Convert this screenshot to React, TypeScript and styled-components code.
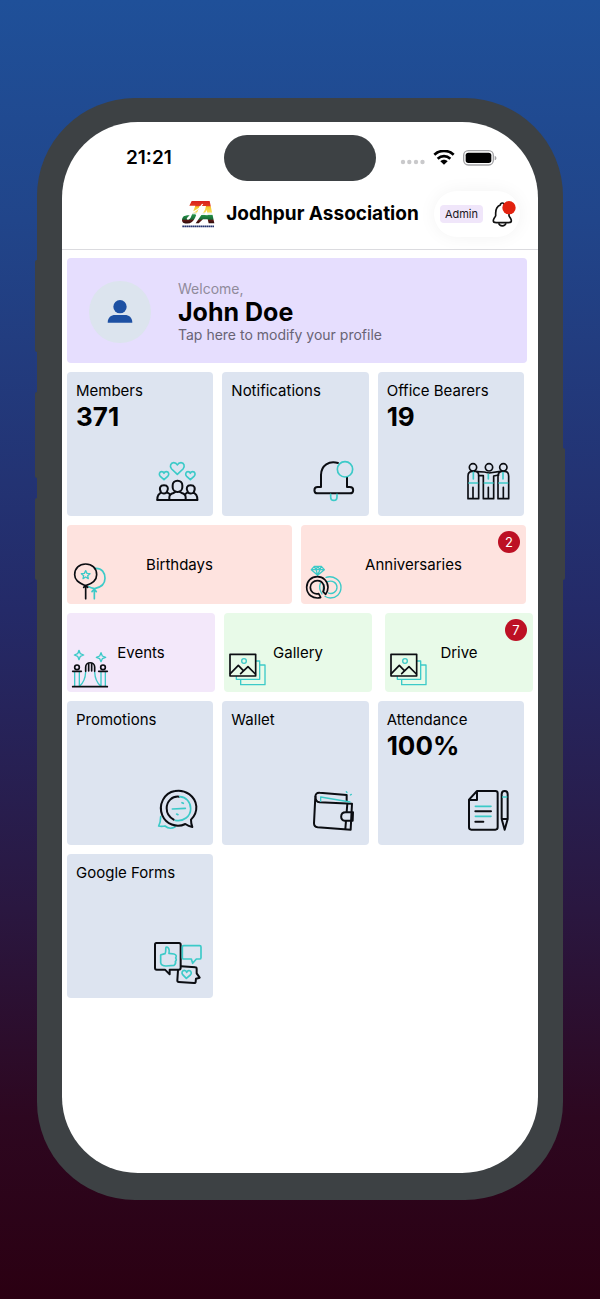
import { FunctionComponent, ReactNode } from "react";
import styled, { createGlobalStyle } from "styled-components";

const INK = "#0b0d12";
const TEAL = "#3ccac8";

const GlobalStyle = createGlobalStyle`
  * {
    box-sizing: border-box;
  }
  body {
    margin: 0;
    font-family: Inter, "Liberation Sans", sans-serif;
    color: #000;
  }
  button {
    font: inherit;
    color: inherit;
    border: 0;
    cursor: pointer;
  }
`;

const Page = styled.div`
  min-height: 100vh;
  padding: 98px 37px 99px;
  background: linear-gradient(
    180deg,
    #1f5099 0%,
    #21458a 17%,
    #242a68 47%,
    #2a1740 70%,
    #2d0720 86%,
    #2b0012 100%
  );
`;
const Phone = styled.div`
  position: relative;
  padding: 24px 25px 27px;
  background: #3d4144;
  border-radius: 98px;
`;
const SideKey = styled.span<{ $side: "left" | "right"; $top: number; $height: number }>`
  position: absolute;
  ${({ $side }) => $side}: -2px;
  top: ${({ $top }) => $top}px;
  height: ${({ $height }) => $height}px;
  width: 4px;
  background: #3d4144;
  border-radius: 2px;
`;
const Screen = styled.div`
  min-height: calc(100vh - 248px);
  background: #fff;
  border-radius: 76px;
  overflow: hidden;
`;

const StatusBar = styled.div`
  display: grid;
  grid-template-columns: 1fr 152px 1fr;
  align-items: center;
  padding-top: 13px;
  height: 59px;
`;
const Time = styled.span`
  padding-left: 64px;
  font-size: 19px;
  font-weight: 600;
  line-height: 24px;
`;
const Island = styled.div`
  height: 46px;
  border-radius: 23px;
  background: #3d4144;
`;
const StatusIcons = styled.div`
  display: flex;
  align-items: center;
  justify-content: flex-end;
  gap: 8px;
  padding-right: 41px;
`;

const Header = styled.header`
  display: grid;
  grid-template-columns: 1fr auto 1fr;
  align-items: center;
  padding: 10px 0 12px;
  border-bottom: 1px solid #dbdbdf;
`;
const Brand = styled.div`
  grid-column: 2;
  display: flex;
  align-items: center;
  gap: 10px;
`;
const Title = styled.h1`
  margin: 0;
  font-size: 19px;
  font-weight: 700;
  line-height: 26px;
  white-space: nowrap;
`;
const Account = styled.div`
  justify-self: end;
  display: flex;
  align-items: center;
  gap: 9px;
  height: 46px;
  margin-right: 18px;
  padding: 0 4px 0 6px;
  border-radius: 23px;
  background: #fff;
  box-shadow: 0 0 18px rgba(0, 0, 0, 0.05);
`;
const Role = styled.span`
  padding: 0 5px;
  border-radius: 4px;
  background: #f0e6fa;
  color: #1b1722;
  font-size: 11px;
  line-height: 18px;
`;
const BellButton = styled.button`
  display: flex;
  padding: 0;
  background: none;
`;

const Content = styled.main`
  display: flex;
  flex-direction: column;
  gap: 9px;
  padding: 8px 5px;
`;
const Profile = styled.button`
  display: flex;
  align-items: center;
  gap: 27px;
  height: 105px;
  margin-right: 6px;
  padding: 2px 22px 0;
  border-radius: 4px;
  background: #e6defe;
  text-align: left;
`;
const Avatar = styled.span`
  display: grid;
  place-items: center;
  width: 62px;
  height: 62px;
  border-radius: 50%;
  background: #dce4ee;
`;
const ProfileText = styled.span`
  display: flex;
  flex-direction: column;
`;
const Muted = styled.span<{ $color: string }>`
  color: ${({ $color }) => $color};
  font-size: 14px;
  line-height: 18px;
`;
const Name = styled.strong`
  font-size: 25px;
  font-weight: 700;
  line-height: 28px;
`;

const CardGrid = styled.div`
  display: grid;
  grid-template-columns: repeat(3, 1fr);
  gap: 9px;
  margin-right: 9px;
`;
const CardRoot = styled.button`
  display: flex;
  flex-direction: column;
  align-items: flex-start;
  height: 144px;
  padding: 9px 10px 10px 9px;
  border-radius: 4px;
  background: #dde4f0;
  text-align: left;
`;
const Label = styled.span`
  font-size: 15px;
  line-height: 20px;
`;
const Value = styled.strong`
  font-size: 26px;
  font-weight: 700;
  line-height: 32px;
`;
const CardIcon = styled.span`
  display: flex;
  margin-top: auto;
  align-self: flex-end;
`;

const TileRow = styled.div<{ $inset: number }>`
  display: flex;
  gap: 9px;
  margin-right: ${({ $inset }) => $inset}px;
`;
const TileRoot = styled.button<{ $color: string; $spaced?: boolean }>`
  position: relative;
  flex: 1;
  display: grid;
  height: 79px;
  padding: 0 4px;
  margin-left: ${({ $spaced }) => ($spaced ? 4 : 0)}px;
  border-radius: 4px;
  background: ${({ $color }) => $color};
`;
const TileIcon = styled.span`
  display: flex;
  grid-area: 1 / 1;
  place-self: end start;
  padding-bottom: 3px;
`;
const TileLabel = styled(Label)`
  grid-area: 1 / 1;
  place-self: center;
`;
const Badge = styled.span`
  position: absolute;
  top: 6px;
  right: 6px;
  width: 22px;
  height: 22px;
  border-radius: 50%;
  background: #bd1024;
  color: #fff;
  font-size: 13px;
  line-height: 22px;
`;

const Drawing = styled.svg<{ $weight?: number }>`
  display: block;
  overflow: visible;
  fill: none;
  stroke: ${INK};
  stroke-width: ${({ $weight = 6 }) => $weight};
  stroke-linecap: round;
  stroke-linejoin: round;
`;

const MembersIcon = () => (
  <Drawing width="48" height="48" viewBox="18 24 144 144">
    <g stroke={TEAL} strokeWidth="5">
      <path d="M85 73 L68 57 C60 48 66 38 74 38 C80 38 83 41 85 45 C87 41 91 38 96 38 C105 38 109 49 102 57Z" />
      <path d="M45 89 L34 79 C28 73 32 65 38 65 C42 65 44 67 45 70 C46 67 49 65 52 65 C59 65 62 73 56 79Z" />
      <path d="M124 89 L113 79 C107 73 111 65 117 65 C121 65 123 67 124 70 C125 67 128 65 131 65 C138 65 141 73 135 79Z" />
    </g>
    <path d="M25 150 H145" />
    <rect x="71" y="92" width="29" height="34" rx="14" />
    <path d="M61 149 V142 C61 134 66 131 74 129 L80 125 M91 125 L98 129 C105 131 110 134 110 142 V149" />
    <path d="M36 127 C29 113 34 106 45 106 C56 106 60 114 54 125 C50 132 41 132 36 127 L28 135 C26 138 25 142 25 149 M54 127 L62 132" />
    <path d="M134 127 C141 113 136 106 125 106 C114 106 110 114 116 125 C120 132 129 132 134 127 L142 135 C144 138 145 142 145 149 M116 127 L109 132" />
  </Drawing>
);

const AlarmIcon = () => (
  <Drawing width="48" height="48" viewBox="33 24 144 144">
    <path d="M114 39 C88 30 63 47 63 75 V111 H53 C40 111 40 130 53 130 H149 C163 130 163 111 149 111 H141 V82" />
    <circle cx="135" cy="58" r="23" stroke={TEAL} strokeWidth="5" />
    <path d="M92 133 V140 C92 155 111 155 111 140 V133" stroke={TEAL} strokeWidth="5" />
  </Drawing>
);

const BearersIcon = () => (
  <Drawing width="48" height="48" viewBox="501 24 144 144" $weight={5}>
    <circle cx="522" cy="52" r="11" />
    <circle cx="570" cy="52" r="11" />
    <circle cx="613" cy="52" r="11" />
    <path d="M507 146 V78 C507 68 512 64 520 64 H530 C537 64 539 70 539 77 V146 H507 M522 146 V112" />
    <path d="M597 146 V80 C597 70 602 64 609 64 H617 C625 64 629 70 629 79 V146 H597 M613 146 V112" />
    <path d="M534 65 L556 66 L570 69 L604 64 M539 77 H553 V146 H584 V78 L599 75 M568 146 V112" />
    <g stroke={TEAL}>
      <path d="M510 99 H536 M556 99 H582 M600 99 H626" />
      <path d="M523 67 V87 M568 73 V87 M612 68 V87" />
    </g>
  </Drawing>
);

const BalloonsIcon = () => (
  <Drawing width="40" height="40" viewBox="33 123 120 120" $weight={5}>
    <path d="M106 145 C126 144 135 158 135 175 C135 190 125 202 104 206 C96 205 91 204 86 200 M103 208 V236 M96 215 L103 207 L109 215" stroke={TEAL} />
    <path d="M77 197 C54 187 44 179 44 164 C44 145 58 132 77 132 C96 132 110 145 110 164 C110 179 99 190 77 197Z M77 197 V236 M71 202 L77 196 L83 202" />
    <path d="M77 152 L81 160 L90 161 L83 167 L85 176 L77 171 L69 176 L71 167 L64 161 L73 160Z" stroke={TEAL} strokeWidth="4" />
  </Drawing>
);

const RingsIcon = () => (
  <Drawing width="40" height="40" viewBox="735 123 120 120" $weight={5}>
    <g stroke={TEAL} strokeWidth="4">
      <path d="M763 139 H784 L793 149 L773 166 L754 149Z M754 149 H793 M763 139 L768 149 L773 165 L780 149 L784 139 M768 149 L773 139 L780 149" />
      <path d="M798 172 C821 165 843 181 843 202 C843 222 828 234 811 234 C804 234 799 232 795 229" />
      <path d="M803 185 C817 180 831 188 831 202 C831 215 818 224 805 219 M786 222 C780 213 777 201 781 190 M792 214 C788 206 789 200 792 194" />
    </g>
    <path d="M781 233 C758 238 740 223 740 202 C740 183 754 170 772 170 C790 170 804 184 804 202 C804 210 801 217 797 223 L789 215 C797 203 790 182 772 182 C760 182 751 191 751 202 C751 216 763 224 776 221 L782 232" />
  </Drawing>
);

const EventsIcon = () => (
  <Drawing width="40" height="40" viewBox="33 117 120 120" $weight={5}>
    <g stroke={TEAL} strokeWidth="4">
      <path d="M57 121 L61 131 L71 135 L61 139 L57 149 L53 139 L43 135 L53 131Z" />
      <path d="M123 128 L127 138 L137 142 L127 146 L123 155 L119 146 L109 142 L119 138Z" />
      <path d="M44 186 V227 M58 186 V227 M123 186 V227 M136 186 V227 M77 186 C76 207 71 218 59 228 M104 186 C105 207 110 218 122 228" />
    </g>
    <circle cx="51" cy="172" r="7" />
    <circle cx="129" cy="172" r="7" />
    <path d="M38 184 H64 M116 184 H142 M38 230 H142" />
    <path d="M77 184 V171 C77 154 104 154 104 171 V184 M86 183 V162 M95 183 V162" />
  </Drawing>
);

const PicturesIcon = () => (
  <Drawing width="40" height="40" viewBox="504 117 120 120" $weight={5}>
    <path d="M588 153 H599 V208 H529 V200 M600 165 H615 V224 H542 V210" stroke={TEAL} strokeWidth="4" />
    <rect x="510" y="133" width="77" height="65" />
    <path d="M511 191 L535 166 L550 182 M542 191 L564 170 L586 192" />
    <circle cx="552" cy="153" r="7" stroke={TEAL} strokeWidth="4" />
  </Drawing>
);

const PromotionsIcon = () => (
  <Drawing width="48" height="48" viewBox="18 21 144 144">
    <path d="M35 110 C35 122 34 128 29 138 C36 140 43 139 48 138 C56 145 67 147 78 141" stroke={TEAL} strokeWidth="5" />
    <path d="M130 141 C121 139 115 136 109 132 C82 145 51 132 40 106 C27 75 45 38 78 33 C109 27 139 49 142 79 C143 95 137 108 126 119 C126 129 127 134 130 141Z" />
    <path d="M90 50 C69 48 53 64 53 85 C53 99 61 112 74 119" />
    <path d="M92 50 C111 51 125 66 125 86 C125 109 103 126 79 121 M70 87 L109 85 M99 68 L103 70 M83 102 L87 104" stroke={TEAL} strokeWidth="5" />
  </Drawing>
);

const WalletIcon = () => (
  <Drawing width="48" height="48" viewBox="483 21 144 144">
    <path d="M590 62 V45 L509 38 C501 37 496 43 496 50 L492 130 C492 137 496 141 503 142 L602 149 L606 71 L509 67 C500 66 496 59 497 49" />
    <path d="M592 71 L590 96 M588 122 L586 147 M609 97 H587 C569 97 570 122 584 122 H608Z" />
    <path d="M512 64 V51 L600 66 M589 35 L591 38 M604 43 L601 45" stroke={TEAL} strokeWidth="4" />
  </Drawing>
);

const AttendanceIcon = () => (
  <Drawing width="48" height="48" viewBox="21 21 144 144">
    <path d="M54 33 H109 C114 33 116 36 116 40 V142 C116 147 113 149 109 149 H37 C32 149 30 146 30 142 V59Z M54 33 V60 H30" />
    <path d="M128 117 V43 C128 30 146 30 146 43 V117 L137 149Z M129 117 H145" />
    <path d="M49 94 H96 M49 125 H73" />
    <path d="M49 79 H96 M49 109 H96 M131 51 H143" stroke={TEAL} strokeWidth="5" />
  </Drawing>
);

const FormsIcon = () => (
  <Drawing width="48" height="48" viewBox="18 30 144 144">
    <path d="M22 39 H90 C94 39 95 41 95 44 V113 C95 117 93 119 89 119 H62 V133 L48 119 H23 C19 119 18 117 18 113 V44 C18 41 19 39 22 39Z" />
    <path d="M96 109 L139 112 C142 112 143 114 143 117 V130 L152 143 L141 146 L140 155 C140 158 138 159 135 159 L89 156 C86 156 85 154 85 151 L87 121" />
    <g stroke={TEAL} strokeWidth="5">
      <path d="M104 47 H152 C155 47 156 49 156 51 V83 C156 86 154 87 151 87 H142 L131 100 L127 87 H104 C101 87 100 85 100 83 V51 C100 49 101 47 104 47Z" />
      <path d="M35 79 C34 75 36 73 40 73 L48 71 C52 65 49 58 51 52 C57 49 63 57 60 70 L75 72 C84 74 82 81 80 84 C83 88 82 92 79 94 C81 99 79 103 75 106 L51 108 C43 108 36 105 35 98Z" />
      <path d="M112 145 L101 134 C96 127 101 121 106 121 C109 121 112 123 113 127 C115 123 118 121 121 122 C127 123 129 130 124 135Z" />
    </g>
  </Drawing>
);

const LogoIcon = () => (
  <svg width="35" height="29" viewBox="0 0 105 87" role="img" aria-label="JA">
    <defs>
      <linearGradient id="flag" x1="0" y1="0" x2="0" y2="1">
        <stop offset="0" stopColor="#d8231f" />
        <stop offset="0.2" stopColor="#e2371f" />
        <stop offset="0.26" stopColor="#f4c52c" />
        <stop offset="0.48" stopColor="#f6dd57" />
        <stop offset="0.54" stopColor="#f7f7f0" />
        <stop offset="0.62" stopColor="#249147" />
        <stop offset="0.8" stopColor="#176b36" />
        <stop offset="0.86" stopColor="#5a1714" />
        <stop offset="1" stopColor="#240b0b" />
      </linearGradient>
    </defs>
    <path
      d="M32 3 H86 L100 70 H83 L80 58 H66 L53 70 H44 L72 29 L75 18 L56 18 L43 52 C36 69 23 74 8 69 C-1 63 3 50 13 46 L26 46 L18 54 C15 60 25 62 30 51 L43 17 H25Z"
      fill="url(#flag)"
    />
    <path d="M70 45 L77 29 L80 46Z" fill="#fff" />
    <path d="M9 46 C33 38 53 32 65 12 M44 43 L99 42" fill="none" stroke="#fff" strokeWidth="4" />
    <path d="M4 79 H100" stroke="#25346f" strokeWidth="5" strokeDasharray="5 1" />
  </svg>
);

const DotsIcon = () => (
  <svg width="25" height="16" viewBox="0 0 25 16" fill="#c9c9cb">
    <circle cx="3" cy="12" r="2.2" />
    <circle cx="9.3" cy="12" r="2.2" />
    <circle cx="16" cy="12" r="2.2" />
    <circle cx="22.5" cy="12" r="2.2" />
  </svg>
);

const WifiIcon = () => (
  <svg width="22" height="16" viewBox="0 0 66 48" fill="none" stroke="#000" strokeWidth="8">
    <path d="M4 14 C20 -1 46 -1 62 14" />
    <path d="M14 26 C25 16 41 16 52 26" />
    <path d="M33 44 L22 34 C28 28 38 28 44 34Z" fill="#000" stroke="none" />
  </svg>
);

const BatteryIcon = () => (
  <svg width="34" height="16" viewBox="0 0 102 48">
    <rect x="2" y="2" width="89" height="43" rx="14" fill="none" stroke="#a2a2a5" strokeWidth="4" />
    <rect x="8" y="8" width="77" height="31" rx="8" fill="#000" />
    <path d="M95 17 C102 20 102 28 95 31Z" fill="#a2a2a5" />
  </svg>
);

const HeaderBellIcon = () => (
  <svg width="24" height="26" viewBox="0 0 72 78" fill="none" stroke="#111" strokeWidth="5" strokeLinejoin="round">
    <path d="M25 12 C26 4 36 4 37 12 C47 16 51 24 51 36 V44 C52 49 59 53 58 60 C58 65 54 65 49 65 H13 C8 65 4 65 4 60 C3 53 10 49 11 44 V36 C11 24 15 16 25 12Z" />
    <path d="M20 67 C23 77 39 77 42 67" />
    <circle cx="51" cy="20" r="20" fill="#e2220f" stroke="none" />
  </svg>
);

const PersonIcon = () => (
  <svg width="26" height="24" viewBox="0 0 78 72" fill="#1d50a3">
    <circle cx="39" cy="20" r="20" />
    <path d="M2 68 C2 52 13 45 24 45 H54 C65 45 76 52 76 68Z" />
  </svg>
);

type CardProps = {
  label: string;
  value?: string;
  icon: ReactNode;
};

const Card: FunctionComponent<CardProps> = ({ label, value, icon }) => (
  <CardRoot type="button">
    <Label>{label}</Label>
    {value && <Value>{value}</Value>}
    <CardIcon>{icon}</CardIcon>
  </CardRoot>
);

type TileProps = {
  label: string;
  color: string;
  icon: ReactNode;
  badge?: number;
  spaced?: boolean;
};

const Tile: FunctionComponent<TileProps> = ({ label, color, icon, badge, spaced }) => (
  <TileRoot type="button" $color={color} $spaced={spaced}>
    <TileIcon>{icon}</TileIcon>
    <TileLabel>{label}</TileLabel>
    {badge && <Badge>{badge}</Badge>}
  </TileRoot>
);

const App: FunctionComponent = () => {
  return (
    <Page>
      <GlobalStyle />
      <Phone>
        <SideKey $side="left" $top={162} $height={92} />
        <SideKey $side="left" $top={294} $height={86} />
        <SideKey $side="left" $top={400} $height={82} />
        <SideKey $side="right" $top={350} $height={132} />
        <Screen>
          <StatusBar>
            <Time>21:21</Time>
            <Island />
            <StatusIcons>
              <DotsIcon />
              <WifiIcon />
              <BatteryIcon />
            </StatusIcons>
          </StatusBar>
          <Header>
            <Brand>
              <LogoIcon />
              <Title>Jodhpur Association</Title>
            </Brand>
            <Account>
              <Role>Admin</Role>
              <BellButton type="button" aria-label="Notifications">
                <HeaderBellIcon />
              </BellButton>
            </Account>
          </Header>
          <Content>
            <Profile type="button">
              <Avatar>
                <PersonIcon />
              </Avatar>
              <ProfileText>
                <Muted $color="#908b9b">Welcome,</Muted>
                <Name>John Doe</Name>
                <Muted $color="#686374">Tap here to modify your profile</Muted>
              </ProfileText>
            </Profile>
            <CardGrid>
              <Card label="Members" value="371" icon={<MembersIcon />} />
              <Card label="Notifications" icon={<AlarmIcon />} />
              <Card label="Office Bearers" value="19" icon={<BearersIcon />} />
            </CardGrid>
            <TileRow $inset={7}>
              <Tile label="Birthdays" color="#fee3df" icon={<BalloonsIcon />} />
              <Tile label="Anniversaries" color="#fee3df" icon={<RingsIcon />} badge={2} />
            </TileRow>
            <TileRow $inset={0}>
              <Tile label="Events" color="#f3e8fa" icon={<EventsIcon />} />
              <Tile label="Gallery" color="#e8fae8" icon={<PicturesIcon />} />
              <Tile label="Drive" color="#e8fae8" icon={<PicturesIcon />} badge={7} spaced />
            </TileRow>
            <CardGrid>
              <Card label="Promotions" icon={<PromotionsIcon />} />
              <Card label="Wallet" icon={<WalletIcon />} />
              <Card label="Attendance" value="100%" icon={<AttendanceIcon />} />
              <Card label="Google Forms" icon={<FormsIcon />} />
            </CardGrid>
          </Content>
        </Screen>
      </Phone>
    </Page>
  );
};

export default App;
